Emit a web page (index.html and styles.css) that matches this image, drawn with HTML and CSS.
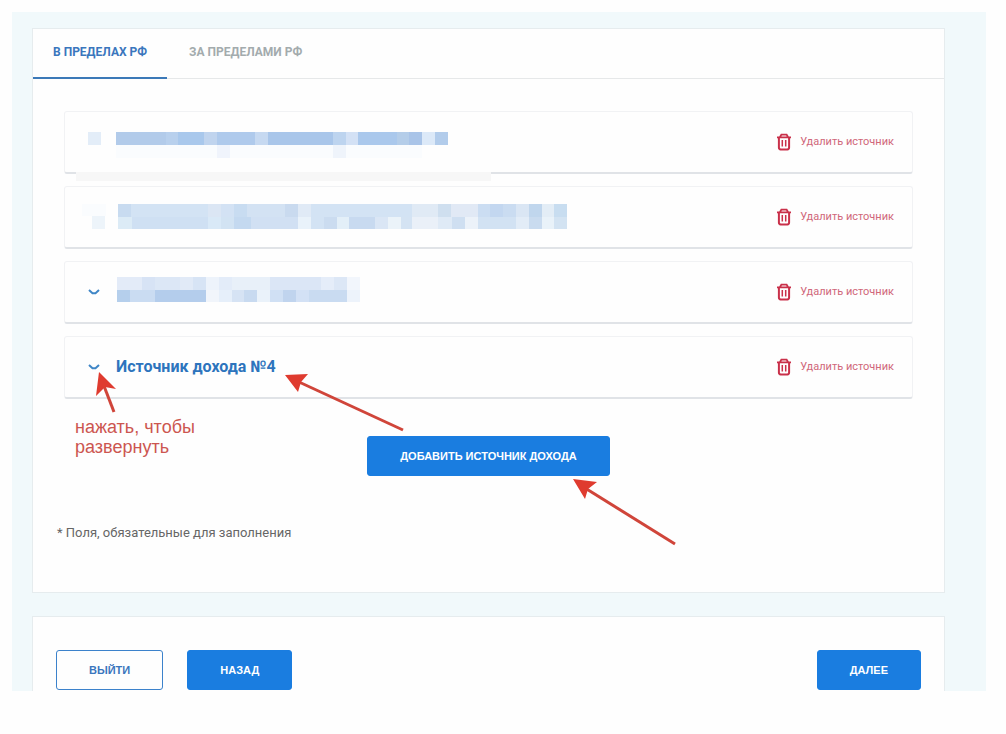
FILE: index.html
```html
<!DOCTYPE html>
<html lang="ru">

<head>
  <meta charset="UTF-8" />
  <meta name="viewport" content="width=device-width, initial-scale=1.0" />
  <title>Источники дохода</title>

  <link rel="stylesheet" href="styles.css">
</head>

<body>

  <!-- Shared icons -->
  <svg class="icon-defs" width="0" height="0" aria-hidden="true">
    <symbol id="icon-chevron" viewBox="0 0 12 8">
      <path d="M1 2L4.5 5.2H7.5L11 2" fill="none" stroke="#3f86c6" stroke-width="2" />
    </symbol>
    <symbol id="icon-trash" viewBox="0 0 16 18">
      <path d="M1 4.3H15M4 4L5.4 1.6H10.6L12 4" fill="none" stroke="#c9304a" stroke-width="1.8" />
      <path d="M2.9 4.5V14.6Q2.9 16.4 4.6 16.4H11.4Q13.1 16.4 13.1 14.6V4.5" fill="none" stroke="#c9304a" stroke-width="2" />
      <path d="M6.3 7V13.6M9.7 7V13.6" fill="none" stroke="#c9304a" stroke-width="1.5" />
    </symbol>
  </svg>

  <main class="page">

    <section class="panel">
      <!-- Tabs -->
      <nav class="tabs">
        <a class="tab tab-active" href="#inside">В ПРЕДЕЛАХ РФ</a>
        <a class="tab" href="#outside">ЗА ПРЕДЕЛАМИ РФ</a>
      </nav>

      <!-- Income sources -->
      <div class="sources" id="inside">
        <div class="source">
          <button class="toggle" type="button" aria-label="Развернуть">
            <svg width="24" height="40">
              <rect x="6" y="10" width="13" height="13" fill="#e3edf8" />
            </svg>
          </button>
          <svg class="masked" width="452" height="40" shape-rendering="crispEdges" aria-hidden="true">
            <g transform="translate(-1 10)">
              <rect x="0" width="51" height="13" fill="#b2cbea" />
              <rect x="51" width="12" height="13" fill="#b8d0ed" />
              <rect x="63" width="26" height="13" fill="#a9c8ec" />
              <rect x="89" width="13" height="13" fill="#c0d4ee" />
              <rect x="102" width="38" height="13" fill="#afcaec" />
              <rect x="140" width="13" height="13" fill="#c6d9f1" />
              <rect x="153" width="65" height="13" fill="#a9c6ea" />
              <rect x="218" width="13" height="13" fill="#bdd4ef" />
              <rect x="231" width="12" height="13" fill="#d3e1f5" />
              <rect x="243" width="39" height="13" fill="#aac8ec" />
              <rect x="282" width="12" height="13" fill="#b4cde9" />
              <rect x="294" width="13" height="13" fill="#a9c4e8" />
              <rect x="307" width="13" height="13" fill="#dce9f8" />
              <rect x="320" width="13" height="13" fill="#b2cceb" />
              <rect x="0" y="13" width="307" height="13" fill="#fafcfe" />
              <rect x="102" y="13" width="13" height="13" fill="#f0f4fc" />
              <rect x="218" y="13" width="13" height="13" fill="#eff4fb" />
            </g>
          </svg>
          <button class="delete" type="button">
            <svg width="16" height="18"><use href="#icon-trash" /></svg>
            Удалить источник
          </button>
          <span class="strip"></span>
        </div>

        <div class="source">
          <button class="toggle" type="button" aria-label="Развернуть">
            <svg width="24" height="40">
              <rect x="0" y="7" width="24" height="12" fill="#fafcfe" />
              <rect x="10" y="19" width="13" height="13" fill="#edf4fa" />
            </svg>
          </button>
          <svg class="masked" width="452" height="40" shape-rendering="crispEdges" aria-hidden="true">
            <g transform="translate(2 7)">
              <rect x="0" width="14" height="13" fill="#c8dbf0" />
              <rect x="13" width="77" height="13" fill="#d3e3f4" />
              <rect x="90" width="13" height="13" fill="#dbe6f4" />
              <rect x="103" width="13" height="13" fill="#d3e2f4" />
              <rect x="116" width="13" height="13" fill="#c8dcf1" />
              <rect x="129" width="38" height="13" fill="#d3e2f3" />
              <rect x="167" width="13" height="13" fill="#c9daef" />
              <rect x="180" width="13" height="13" fill="#e0eaf6" />
              <rect x="193" width="101" height="13" fill="#d3e3f4" />
              <rect x="294" width="26" height="13" fill="#e0eaf5" />
              <rect x="320" width="13" height="13" fill="#cfdfef" />
              <rect x="333" width="27" height="13" fill="#e1e9f5" />
              <rect x="360" width="12" height="13" fill="#cbddf2" />
              <rect x="372" width="13" height="13" fill="#c3d7f0" />
              <rect x="385" width="13" height="13" fill="#cadcf1" />
              <rect x="398" width="13" height="13" fill="#dae6f4" />
              <rect x="411" width="13" height="13" fill="#c0d6ed" />
              <rect x="424" width="12" height="13" fill="#e3edf6" />
              <rect x="436" width="13" height="13" fill="#c8ddf0" />
            </g>
            <g transform="translate(2 20)">
              <rect x="0" width="14" height="12" fill="#dcebf6" />
              <rect x="14" width="76" height="12" fill="#cfe0f3" />
              <rect x="90" width="13" height="12" fill="#d9e9f7" />
              <rect x="103" width="13" height="12" fill="#d2e3f3" />
              <rect x="116" width="17" height="12" fill="#c4d9f0" />
              <rect x="133" width="47" height="12" fill="#d1e0f3" />
              <rect x="180" width="13" height="12" fill="#e9f2fa" />
              <rect x="193" width="13" height="12" fill="#d3e3f4" />
              <rect x="206" width="13" height="12" fill="#cbdcf0" />
              <rect x="219" width="12" height="12" fill="#e3eff8" />
              <rect x="231" width="26" height="12" fill="#c8daf0" />
              <rect x="257" width="13" height="12" fill="#dae6f5" />
              <rect x="270" width="13" height="12" fill="#ebf3f9" />
              <rect x="283" width="11" height="12" fill="#d4e3f3" />
              <rect x="294" width="26" height="12" fill="#eaf0f8" />
              <rect x="320" width="14" height="12" fill="#dfeaf6" />
              <rect x="334" width="13" height="12" fill="#cfdff1" />
              <rect x="347" width="13" height="12" fill="#ecf2f9" />
              <rect x="360" width="38" height="12" fill="#d2e2f3" />
              <rect x="398" width="13" height="12" fill="#e2ecf7" />
              <rect x="411" width="13" height="12" fill="#c9dbef" />
              <rect x="424" width="12" height="12" fill="#e9f2f9" />
              <rect x="436" width="13" height="12" fill="#d3e3f2" />
            </g>
          </svg>
          <button class="delete" type="button">
            <svg width="16" height="18"><use href="#icon-trash" /></svg>
            Удалить источник
          </button>
        </div>

        <div class="source">
          <button class="toggle" type="button" aria-label="Развернуть">
            <svg width="12" height="8"><use href="#icon-chevron" /></svg>
          </button>
          <svg class="masked" width="452" height="40" shape-rendering="crispEdges" aria-hidden="true">
            <g transform="translate(1 5)">
              <rect x="0" width="25" height="13" fill="#e3ebf8" />
              <rect x="25" width="13" height="13" fill="#d7e3f5" />
              <rect x="38" width="25" height="13" fill="#dce7f6" />
              <rect x="63" width="13" height="13" fill="#e1eaf7" />
              <rect x="76" width="13" height="13" fill="#d7e4f5" />
              <rect x="89" width="13" height="13" fill="#edf3fb" />
              <rect x="102" width="13" height="13" fill="#e3ecf9" />
              <rect x="115" width="38" height="13" fill="#e8f0f9" />
              <rect x="153" width="51" height="13" fill="#dbe6f6" />
              <rect x="204" width="13" height="13" fill="#e5edf9" />
              <rect x="217" width="13" height="13" fill="#dce7f6" />
              <rect x="230" width="13" height="13" fill="#f2f6fc" />
            </g>
            <g transform="translate(1 18)">
              <rect x="0" width="13" height="12" fill="#b5cfec" />
              <rect x="13" width="25" height="12" fill="#cadcf2" />
              <rect x="38" width="51" height="12" fill="#b4cdec" />
              <rect x="89" width="13" height="12" fill="#f1f5fb" />
              <rect x="102" width="13" height="12" fill="#e6effa" />
              <rect x="115" width="12" height="12" fill="#d6e3f4" />
              <rect x="127" width="13" height="12" fill="#c8daf0" />
              <rect x="140" width="13" height="12" fill="#eaf2fa" />
              <rect x="153" width="13" height="12" fill="#d0e0f4" />
              <rect x="166" width="13" height="12" fill="#c0d4ee" />
              <rect x="179" width="13" height="12" fill="#d3e1f5" />
              <rect x="192" width="38" height="12" fill="#c9dbf1" />
              <rect x="230" width="13" height="12" fill="#edf3fb" />
            </g>
          </svg>
          <button class="delete" type="button">
            <svg width="16" height="18"><use href="#icon-trash" /></svg>
            Удалить источник
          </button>
        </div>

        <div class="source">
          <button class="toggle" type="button" aria-label="Развернуть">
            <svg width="12" height="8"><use href="#icon-chevron" /></svg>
          </button>
          <h2 class="source-title">Источник дохода №4</h2>
          <button class="delete" type="button">
            <svg width="16" height="18"><use href="#icon-trash" /></svg>
            Удалить источник
          </button>
        </div>
      </div>

      <!-- Add button with the hints around it -->
      <div class="add-row">
        <svg class="arrow arrow-toggle" width="32" height="48" aria-hidden="true">
          <path d="M26 44L16 18" stroke="#d0453a" stroke-width="3" />
          <path d="M11 4L28 21L17 19L8 28Z" fill="#df3b2f" />
        </svg>
        <p class="hint">нажать, чтобы<br>развернуть</p>
        <div class="add-wrap">
          <button class="btn btn-add" type="button">ДОБАВИТЬ ИСТОЧНИК ДОХОДА</button>
          <svg class="arrow arrow-title" width="126" height="66" aria-hidden="true">
            <path d="M122 60L18 12" stroke="#d0453a" stroke-width="3" />
            <path d="M4 5L27 4L20 12L17 22Z" fill="#df3b2f" />
          </svg>
          <svg class="arrow arrow-add" width="110" height="74" aria-hidden="true">
            <path d="M106 69L16 13" stroke="#d0453a" stroke-width="3" />
            <path d="M4 4L28 7L19 14L16 24Z" fill="#df3b2f" />
          </svg>
        </div>
      </div>

      <p class="required">* Поля, обязательные для заполнения</p>
    </section>

    <!-- Navigation buttons -->
    <section class="panel panel-bottom">
      <button class="btn btn-outline" type="button">ВЫЙТИ</button>
      <button class="btn" type="button">НАЗАД</button>
      <button class="btn btn-next" type="button">ДАЛЕЕ</button>
    </section>

  </main>

</body>

</html>
```
FILE: styles.css
```css
* {
  box-sizing: border-box;
}

body {
  font-family: Roboto, "Liberation Sans", sans-serif;
  margin: 0;
  background-color: #fefefe;
  color: #555;
}

button {
  font-family: inherit;
  cursor: pointer;
}

.icon-defs {
  position: absolute;
}

.page {
  display: flex;
  flex-direction: column;
  gap: 23px;
  margin: 12px 20px 0 12px;
  padding: 16px 41px 0 20px;
  background-color: #f1f9fb;
}

.panel {
  background-color: #fefefe;
  border: 1px solid #e6ecee;
}

/* Tabs */
.tabs {
  display: flex;
  gap: 2px;
  height: 50px;
  border-bottom: 1px solid #e6e8e9;
}

.tab {
  height: 50px;
  padding: 0 20px;
  border-bottom: 2px solid transparent;
  font-size: 12px;
  font-weight: 700;
  line-height: 46px;
  color: #a3abad;
  text-decoration: none;
}

.tab-active {
  border-bottom-color: #3c79b8;
  color: #3a76bd;
}

/* Cards with income sources */
.sources {
  display: flex;
  flex-direction: column;
  gap: 12px;
  padding: 32px 31px 0;
}

.source {
  position: relative;
  display: flex;
  align-items: center;
  height: 63px;
  padding: 0 18px 0 17px;
  border: 1px solid #f1f2f4;
  border-bottom: 2px solid #e0e3e7;
  border-radius: 3px;
}

.toggle {
  display: flex;
  align-items: center;
  justify-content: center;
  width: 24px;
  height: 40px;
  margin-right: 10px;
  padding: 0;
  border: none;
  background: none;
}

.source-title {
  margin: 0;
  font-size: 16px;
  font-weight: 700;
  line-height: 20px;
  color: #2d74bd;
}

.delete {
  display: flex;
  align-items: center;
  gap: 8px;
  margin-left: auto;
  padding: 0;
  border: none;
  background: none;
  font-size: 11px;
  line-height: 18px;
  color: #d0677a;
}

/* Grey strip under the first card */
.strip {
  position: absolute;
  left: 11px;
  bottom: -9px;
  width: 49%;
  height: 9px;
  background-color: #f7f7f7;
}

/* Buttons */
.btn {
  height: 40px;
  padding: 0 32px;
  border: 1px solid #1a7de0;
  border-radius: 3px;
  background-color: #1a7de0;
  color: #fff;
  font-family: "Liberation Sans", Arial, sans-serif;
  font-size: 11px;
  font-weight: 700;
}

.btn-outline {
  background-color: #fefefe;
  border-color: #3c82cb;
  color: #3a76bd;
}

/* Add row and hints */
.add-row {
  position: relative;
  display: flex;
  justify-content: center;
  margin: 0 31px;
  padding-top: 37px;
}

.add-wrap {
  position: relative;
}

.arrow {
  position: absolute;
  pointer-events: none;
}

.arrow-toggle {
  left: 24px;
  top: -31px;
}

.arrow-title {
  left: -86px;
  top: -66px;
}

.arrow-add {
  left: 202px;
  top: 39px;
}

.hint {
  position: absolute;
  left: 11px;
  top: 18px;
  margin: 0;
  font-family: "Liberation Sans", Arial, sans-serif;
  font-size: 18px;
  line-height: 20px;
  color: #cc5650;
}

.required {
  margin: 0;
  padding: 47px 24px 49px;
  font-size: 13px;
  line-height: 20px;
  color: #666;
}

.panel-bottom {
  display: flex;
  gap: 24px;
  padding: 33px 23px 1px;
  border-bottom: none;
}

.btn-next {
  margin-left: auto;
}
```
